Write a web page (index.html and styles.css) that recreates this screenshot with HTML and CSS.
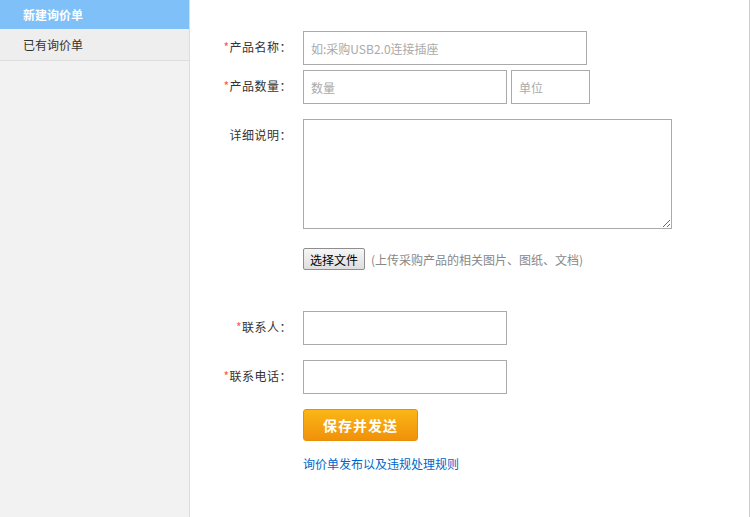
FILE: index.html
```html
<!DOCTYPE html>
<html lang="zh-CN">
<head>
    <meta charset="UTF-8">
    <title>新建询价单</title>
    <link rel="stylesheet" href="styles.css">
</head>
<body>
    <div class="page">
        <div class="sidebar">
            <a class="side-item active" href="#">新建询价单</a>
            <a class="side-item" href="#">已有询价单</a>
        </div>
        <div class="main">
            <form class="inquiry-form">
                <div class="form-row">
                    <label class="form-label"><span class="req">*</span>产品名称：</label>
                    <input class="input-field w-name" type="text" placeholder="如:采购USB2.0连接插座">
                </div>
                <div class="form-row row-qty">
                    <label class="form-label"><span class="req">*</span>产品数量：</label>
                    <input class="input-field w-mid" type="text" placeholder="数量">
                    <input class="input-field w-unit" type="text" placeholder="单位">
                </div>
                <div class="form-row row-desc">
                    <label class="form-label">详细说明：</label>
                    <textarea class="input-field textarea"></textarea>
                </div>
                <div class="form-row row-file">
                    <span class="form-label"></span>
                    <button type="button" class="file-button">选择文件</button>
                    <span class="file-tip">(上传采购产品的相关图片、图纸、文档)</span>
                </div>
                <div class="form-row row-contact">
                    <label class="form-label"><span class="req">*</span>联系人：</label>
                    <input class="input-field w-mid" type="text">
                </div>
                <div class="form-row row-phone">
                    <label class="form-label"><span class="req">*</span>联系电话：</label>
                    <input class="input-field w-mid" type="text">
                </div>
                <div class="form-row row-submit">
                    <span class="form-label"></span>
                    <button type="submit" class="submit-button">保存并发送</button>
                </div>
                <div class="form-row row-rules">
                    <span class="form-label"></span>
                    <a class="rules-link" href="#">询价单发布以及违规处理规则</a>
                </div>
            </form>
        </div>
    </div>
</body>
</html>
```

FILE: styles.css
```css
html, body {
    height: 100%;
}
body {
    margin: 0;
    font-family: "Noto Sans CJK SC", "Liberation Sans", sans-serif;
    font-size: 12px;
    color: #333;
    background: #fff;
}
.page {
    display: flex;
    width: 749px;
    height: 100%;
    border-right: 1px solid #ccc;
}
.sidebar {
    width: 189px;
    flex-shrink: 0;
    background: #f2f2f2;
    border-right: 1px solid #ddd;
}
.side-item {
    display: block;
    height: 30px;
    line-height: 30px;
    padding-left: 23px;
    background: #eee;
    border-bottom: 1px solid #ddd;
    color: #333;
    text-decoration: none;
}
.side-item.active {
    height: 29px;
    line-height: 29px;
    background: #80c0f9;
    border-bottom-color: #e6f1fb;
    color: #fff;
    font-weight: bold;
}
.main {
    flex: 1;
    padding-top: 31px;
}
.form-row {
    display: flex;
    align-items: flex-start;
    margin-bottom: 5px;
}
.form-label {
    width: 102px;
    flex-shrink: 0;
    margin-right: 11px;
    line-height: 31px;
    text-align: right;
    letter-spacing: 0.5px;
}
.req {
    color: #f55;
}
.input-field {
    box-sizing: border-box;
    height: 34px;
    padding: 0 7px;
    border: 1px solid #aaa;
    font-family: inherit;
    font-size: 12px;
    color: #333;
    outline: none;
}
.input-field::placeholder {
    color: #aaa;
}
.w-name {
    width: 284px;
}
.w-mid {
    width: 204px;
}
.w-unit {
    width: 79px;
    margin-left: 4px;
}
.row-qty {
    margin-bottom: 15px;
}
.textarea {
    width: 369px;
    height: 110px;
    resize: both;
}
.row-desc {
    margin-bottom: 19px;
}
.row-file {
    align-items: center;
    margin-bottom: 41px;
}
.row-file .form-label {
    line-height: 22px;
}
.file-button {
    height: 22px;
    padding: 0 6px;
    border: 1px solid #8e8e8e;
    border-radius: 2px;
    background: linear-gradient(#f6f6f6, #dedede);
    font-family: inherit;
    font-size: 12px;
    color: #000;
}
.file-tip {
    margin-left: 6px;
    color: #888;
}
.row-contact,
.row-phone {
    margin-bottom: 15px;
}
.submit-button {
    width: 115px;
    height: 32px;
    border: 1px solid #e98c06;
    border-radius: 3px;
    background: linear-gradient(#fbb616, #f0910a);
    color: #fff;
    font-family: inherit;
    font-size: 14px;
    font-weight: bold;
    letter-spacing: 1px;
    cursor: pointer;
}
.row-submit {
    margin-bottom: 16px;
}
.row-rules .form-label {
    line-height: 14px;
}
.rules-link {
    line-height: 14px;
    color: #0066cc;
    text-decoration: none;
}
```
